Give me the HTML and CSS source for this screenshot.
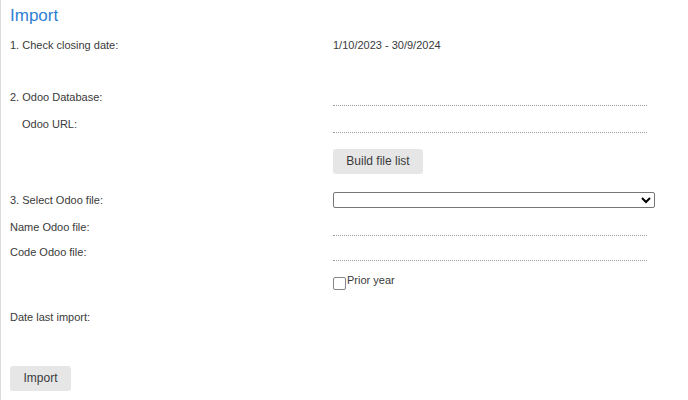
FILE: index.html
```html
<!DOCTYPE html>
<html>
<head>
<meta charset="utf-8">
<link rel="stylesheet" href="styles.css">
</head>
<body>
<div class="page">
  <h1 class="title">Import</h1>
  <div class="form">
    <div class="label">1. Check closing date:</div>
    <div class="value">1/10/2023 - 30/9/2024</div>

    <div class="label"></div>
    <div class="value"></div>

    <div class="label">2. Odoo Database:</div>
    <div class="value"><span class="field"></span></div>

    <div class="label indent">Odoo URL:</div>
    <div class="value"><span class="field"></span></div>

    <div class="label"></div>
    <div class="value"><button class="btn btn-build">Build file list</button></div>

    <div class="label">3. Select Odoo file:</div>
    <div class="value"><select class="select"><option></option></select></div>

    <div class="label">Name Odoo file:</div>
    <div class="value"><span class="field"></span></div>

    <div class="label">Code Odoo file:</div>
    <div class="value"><span class="field"></span></div>

    <div class="label"></div>
    <div class="value"><label class="check"><input type="checkbox" class="checkbox"><span class="check-text">Prior year</span></label></div>

    <div class="label">Date last import:</div>
    <div class="value"></div>

    <div class="label"></div>
    <div class="value"></div>

    <div class="label"><button class="btn btn-import">Import</button></div>
    <div class="value"></div>
  </div>
</div>
</body>
</html>
```
FILE: styles.css
```css
html, body {
  margin: 0;
  padding: 0;
  background: #ffffff;
}
body {
  font-family: "Liberation Sans", Arial, sans-serif;
  font-size: 11px;
  color: #3a3a3a;
}
.page {
  height: 400px;
  border-left: 1px solid #dcdcdc;
  box-sizing: border-box;
  padding-left: 9px;
}
.title {
  margin: 0;
  height: 32px;
  line-height: 32px;
  font-size: 17px;
  font-weight: normal;
  color: #2f7fd3;
}
.form {
  display: grid;
  grid-template-columns: 323px 323px;
  grid-template-rows: 26px 26px 26px 28px 46px 32px 22px 28px 32px 38px 24px 36px;
}
.label, .value {
  display: flex;
  align-items: center;
}
.indent {
  padding-left: 12px;
}
.field {
  display: block;
  width: 314px;
  height: 16px;
  border-bottom: 1px dotted #9a9a9a;
}
.btn {
  font-family: "Liberation Sans", Arial, sans-serif;
  font-size: 12px;
  color: #3a3a3a;
  background: #e6e6e6;
  border: none;
  border-radius: 3px;
  height: 25px;
  padding: 0 12px;
  margin: 0;
}
.btn-build {
  width: 90px;
}
.btn-import {
  width: 61px;
}
.select {
  width: 322px;
  height: 16px;
  margin: 0;
  font-size: 11px;
  border: 1px solid #767676;
  border-radius: 2px;
  background: #ffffff;
}
.check {
  display: flex;
  align-items: flex-start;
  height: 18px;
}
.checkbox {
  appearance: none;
  -webkit-appearance: none;
  box-sizing: border-box;
  margin: 4px 1px 0 0;
  width: 13px;
  height: 13px;
  border: 1px solid #858585;
  border-radius: 2px;
  background: #ffffff;
}
.check-text {
  line-height: 12px;
  margin-top: 1px;
}
```
